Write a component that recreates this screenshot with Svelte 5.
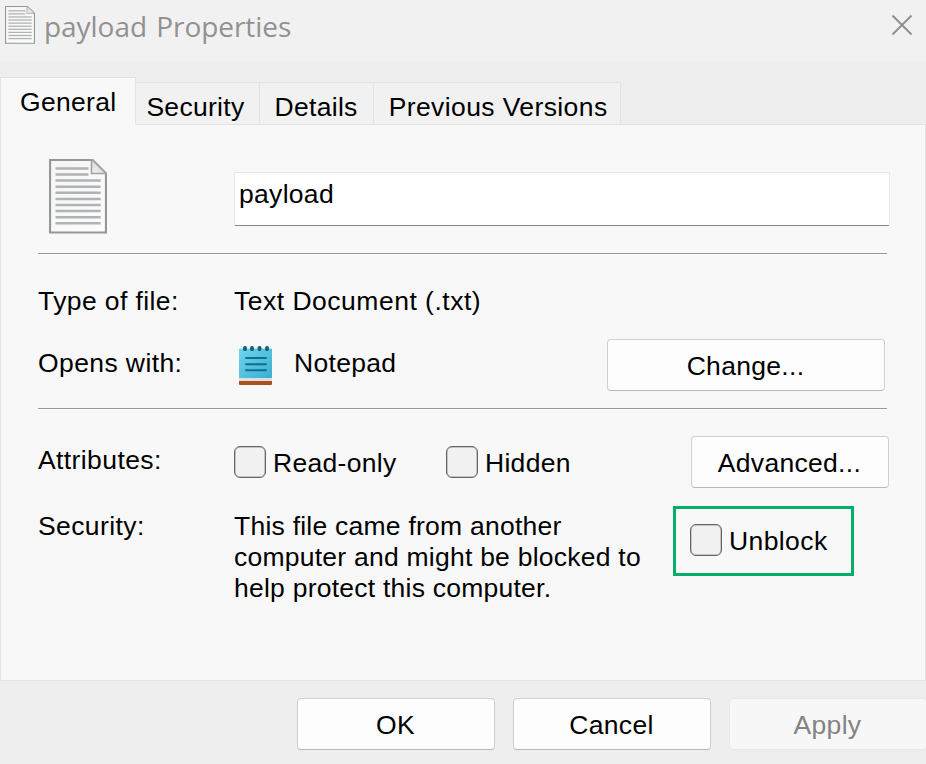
<script>
	let tabs = ['General', 'Security', 'Details', 'Previous Versions']
	let active = $state('General')
	let fileName = $state('payload')
	let readOnly = $state(false)
	let hidden = $state(false)
	let unblock = $state(false)

	// text lines on the document icon, the first two stop before the folded corner
	let lines = [9.5, 15.5, 21.6, 27.7, 33.8, 39.9, 46, 52.1, 58.2, 64.3]
</script>

{#snippet documentIcon(cls)}
	<svg class={cls} viewBox="0 0 58 75" preserveAspectRatio="none">
		<defs>
			<linearGradient id="{cls}-paper" x1="0" y1="0" x2="1" y2="1">
				<stop offset="0" stop-color="#f5f5f5" />
				<stop offset="1" stop-color="#f9fcfe" />
			</linearGradient>
			<linearGradient id="{cls}-fold" x1="0" y1="1" x2="1" y2="0">
				<stop offset="0" stop-color="#f4f4f4" />
				<stop offset="1" stop-color="#cccccc" />
			</linearGradient>
		</defs>
		<path d="M1 1H43.5L57 14.5V73.5H1Z" fill="url(#{cls}-paper)" stroke="#969696" stroke-width="2.2" />
		{#each lines as y, i}
			<path d="M6.5 {y}H{i < 2 ? 39.5 : 51.7}" stroke="#b2b2b2" stroke-width="2.5" />
		{/each}
		<path d="M42.5 1V14.5H57L43.5 1Z" fill="url(#{cls}-fold)" stroke="#a2a2a2" stroke-width="1.6" />
	</svg>
{/snippet}

<main>
	<header>
		{@render documentIcon('small-icon')}
		<h1>payload Properties</h1>
		<button class="close" aria-label="Close">
			<svg width="22" height="22" viewBox="0 0 22 22">
				<path d="M1.5 1.5L20.5 20.5M20.5 1.5L1.5 20.5" stroke="#8d8d8d" stroke-width="1.8" />
			</svg>
		</button>
	</header>

	<nav>
		{#each tabs as tab}
			<button class="tab" class:active={tab == active} onclick={() => (active = tab)}>{tab}</button>
		{/each}
	</nav>

	<section class="panel">
		<div class="row name-row">
			<div class="label">{@render documentIcon('big-icon')}</div>
			<input class="name" type="text" bind:value={fileName} spellcheck="false" />
		</div>
		<hr />
		<div class="row type-row">
			<span class="label">Type of file:</span>
			<span>Text Document (.txt)</span>
		</div>
		<div class="row opens-row">
			<span class="label">Opens with:</span>
			<svg class="notepad" width="34" height="40" viewBox="0 0 34 40">
				<defs>
					<linearGradient id="pad" x1="0" y1="0" x2="1" y2="1">
						<stop offset="0" stop-color="#72d4e9" />
						<stop offset="1" stop-color="#3aaed2" />
					</linearGradient>
				</defs>
				<rect x="0" y="30" width="33" height="9" rx="1" fill="#a9511f" />
				<rect x="0" y="30" width="33" height="5" fill="#dedede" />
				<rect x="0" y="2.5" width="33" height="29.5" rx="1" fill="url(#pad)" />
				{#each [6, 13, 20.5, 28] as x}
					<rect x={x - 1.9} y="0" width="3.8" height="5" rx="1.6" fill="#12647d" />
				{/each}
				<path d="M7 12H27M7 18.2H27M7 24.3H27" stroke="#087090" stroke-width="2" stroke-linecap="round" />
			</svg>
			<span class="app">Notepad</span>
			<button class="btn change">Change...</button>
		</div>
		<hr />
		<div class="row attr-row">
			<span class="label attr-label">Attributes:</span>
			<label class="check read-only"><input type="checkbox" bind:checked={readOnly} />Read-only</label>
			<label class="check"><input type="checkbox" bind:checked={hidden} />Hidden</label>
			<button class="btn advanced">Advanced...</button>
		</div>
		<div class="row security-row">
			<span class="label text">Security:</span>
			<p class="text">This file came from another computer and might be blocked to help protect this computer.</p>
			<div class="highlight">
				<label class="check"><input type="checkbox" bind:checked={unblock} />Unblock</label>
			</div>
		</div>
	</section>

	<footer>
		<button class="btn">OK</button>
		<button class="btn">Cancel</button>
		<button class="btn" disabled>Apply</button>
	</footer>
</main>

<style>
	:global(body) {
		margin: 0;
		overflow: hidden;
	}
	main {
		display: flex;
		flex-direction: column;
		width: 926px;
		height: 764px;
		overflow: hidden;
		background: #eee;
		color: #000;
		font-family: "Liberation Sans", Arial, sans-serif;
		font-size: 26.5px;
		letter-spacing: 0.3px;
		line-height: 31px;
	}
	main * {
		box-sizing: border-box;
	}
	button,
	input {
		font: inherit;
		letter-spacing: inherit;
		color: inherit;
		margin: 0;
	}
	header {
		display: flex;
		align-items: flex-start;
		height: 61px;
		padding: 6px 13px 0 5px;
		background: #f1f1f1;
	}
	header :global(.small-icon) {
		width: 30px;
		height: 38px;
	}
	h1 {
		margin: 0 0 0 9px;
		font-family: "Open Sans", "Noto Sans", sans-serif;
		font-size: 28px;
		font-weight: 400;
		letter-spacing: -0.05px;
		word-spacing: 2px;
		line-height: 40px;
		color: #919191;
	}
	.close {
		display: flex;
		margin: 8px 0 0 auto;
		padding: 0;
		border: 0;
		background: none;
	}
	nav {
		display: flex;
		align-items: flex-end;
		height: 64px;
		flex-shrink: 0;
		background: linear-gradient(#e3e3e3, #e3e3e3) bottom right / 790px 1px no-repeat;
	}
	.tab {
		height: 43px;
		padding: 7px 14px 0 15px;
		border: 1px solid #e3e3e3;
		border-left: 0;
		background: #f1f1f1;
		white-space: nowrap;
	}
	.tab:nth-child(2) {
		padding-left: 10px;
	}
	.tab:nth-child(3) {
		padding-right: 15px;
	}
	.tab:last-child {
		padding-right: 12px;
		letter-spacing: 0.4px;
	}
	.tab.active {
		height: 48px;
		padding: 2px 19px 0;
		border-left: 1px solid #e3e3e3;
		border-bottom-color: #f8f8f8;
		background: #f8f8f8;
	}
	.panel {
		height: 556px;
		flex-shrink: 0;
		padding: 0 36px 0 37px;
		background: #f8f8f8;
		border: 1px solid #e3e3e3;
		border-top: 0;
	}
	hr {
		width: 849px;
		height: 2px;
		margin: 0;
		border: 0;
		border-top: 1px solid #999;
		background: #fff;
	}
	.row {
		display: flex;
		align-items: center;
	}
	.label {
		width: 196px;
		flex-shrink: 0;
		letter-spacing: 0.4px;
	}
	.name-row {
		height: 128px;
		align-items: flex-start;
	}
	.label :global(.big-icon) {
		display: block;
		width: 58px;
		height: 75px;
		margin: 34px 0 0 11px;
	}
	.name {
		width: 656px;
		height: 54px;
		flex-shrink: 0;
		margin-top: 47px;
		padding: 0 4px 10px;
		border: 1px solid #e6e6e6;
		border-bottom-color: #868686;
		border-radius: 2px;
		background: #fff;
		outline: none;
	}
	.type-row {
		height: 62px;
		margin-top: 15px;
		letter-spacing: 0.5px;
	}
	.opens-row {
		height: 62px;
	}
	.opens-row + hr {
		margin-top: 14px;
	}
	.notepad {
		margin: 5px 0 0 5px;
	}
	.app {
		margin-left: 21px;
	}
	.btn {
		width: 198px;
		height: 52px;
		padding: 2px 1px 0 0;
		border: 1px solid #d0d0d0;
		border-bottom-color: #b8b8b8;
		border-radius: 4px;
		background: #fdfdfd;
		text-align: center;
	}
	.change {
		width: 278px;
		margin: 4px 4px 0 auto;
	}
	.attr-row {
		height: 52px;
		margin-top: 26px;
	}
	.attr-label {
		margin-top: -4px;
	}
	.check {
		display: flex;
		align-items: center;
		gap: 7px;
		padding-top: 2px;
	}
	.check input {
		appearance: none;
		width: 32px;
		height: 32px;
		margin-top: -2px;
		border: 1px solid #666;
		border-radius: 6px;
		background: #f1f1f1;
		box-shadow: inset 0 0 0 0.5px #999;
	}
	.check input:checked {
		background: #0067c0;
	}
	.read-only {
		width: 212px;
	}
	.advanced {
		margin: 0 0 0 auto;
	}
	.security-row {
		align-items: flex-start;
		margin-top: 18px;
	}
	.text {
		margin: 5px 0 0;
	}
	p {
		width: 416px;
		letter-spacing: 0.24px;
	}
	.highlight {
		display: flex;
		align-items: center;
		width: 181px;
		height: 70px;
		margin-left: 23px;
		padding: 0 0 2px 14px;
		border: 3px solid #08ad6c;
		flex-shrink: 0;
		letter-spacing: 0.4px;
	}
	footer {
		display: flex;
		gap: 18px;
		padding: 17px 0 0 297px;
	}
	footer .btn {
		flex-shrink: 0;
	}
	.btn:disabled {
		border-color: #e8e8e8;
		background: #f7f7f7;
		color: #838383;
	}
</style>
